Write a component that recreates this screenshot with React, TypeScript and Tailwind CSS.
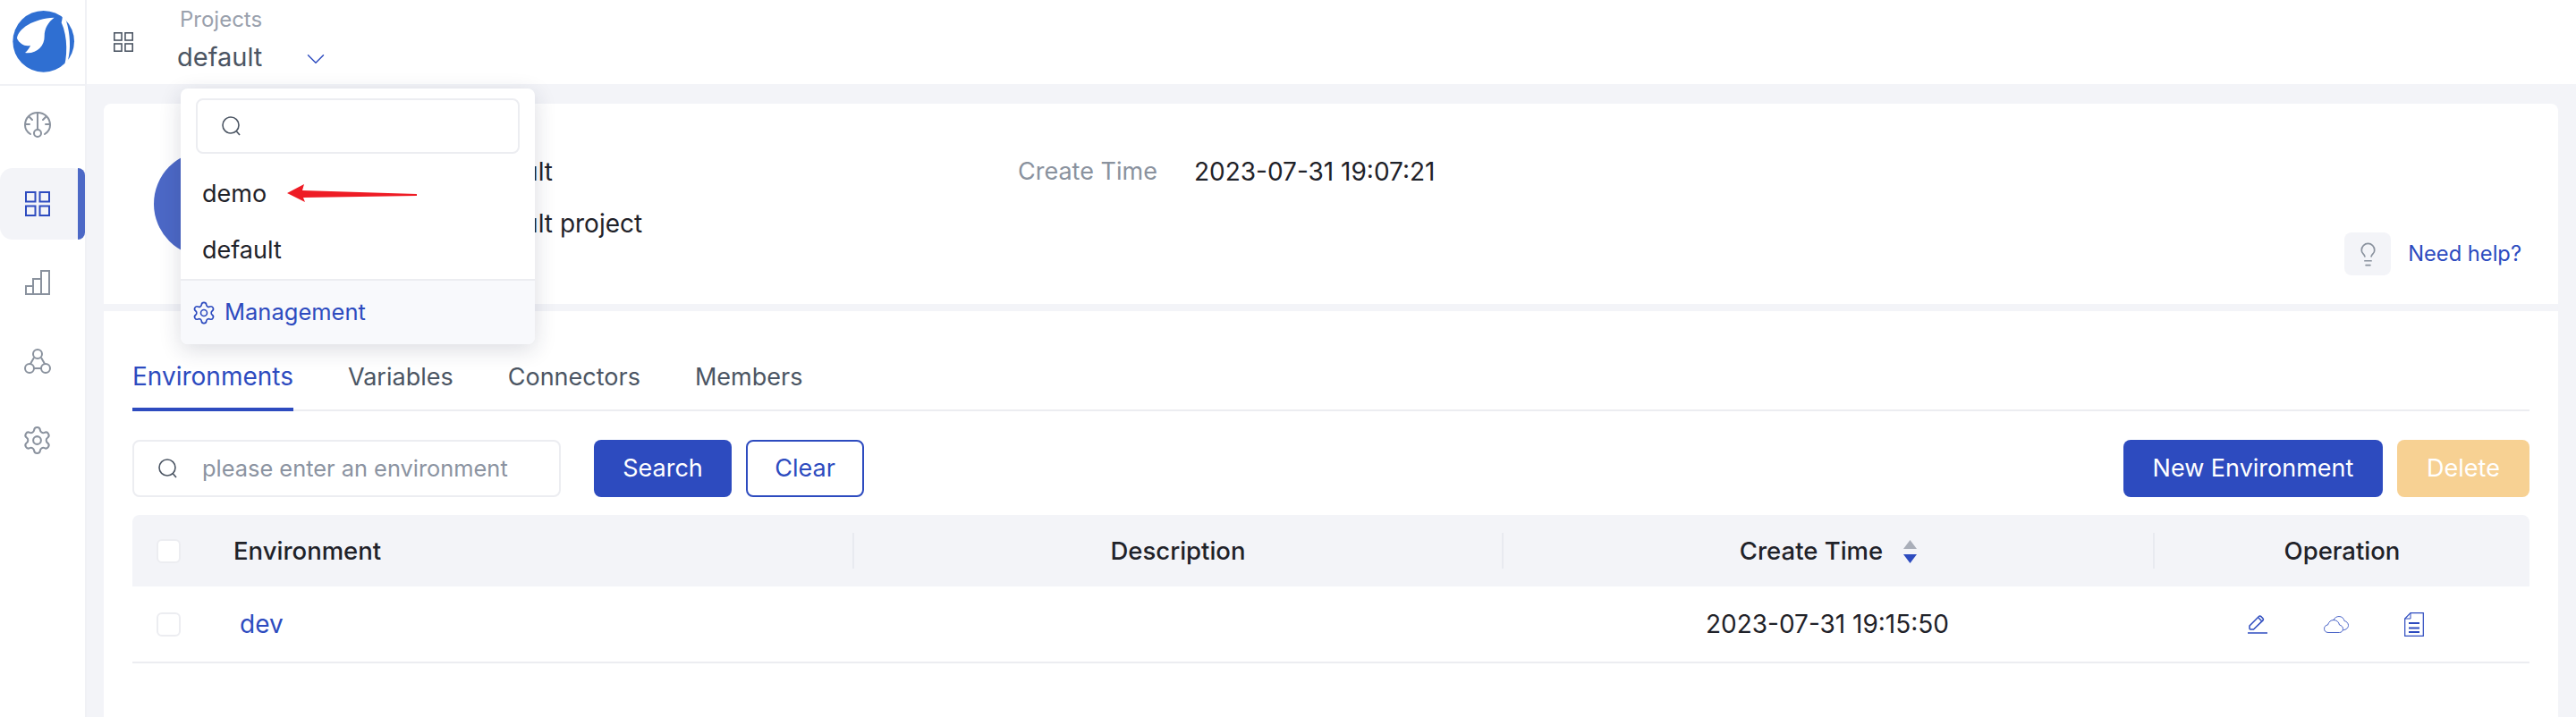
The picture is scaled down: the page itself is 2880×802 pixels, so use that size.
import { ChevronDown, Lightbulb, Settings } from "lucide-react";

const BLUE = "#2d4bbf";

function Logo() {
  return (
    <svg viewBox="0 0 252 240" className="h-[80px] w-[84px]">
      <circle cx="122" cy="115" r="103" fill="#2f6fd2" />
      <path
        d="M33 105C36 72 88 38 158 35C138 50 125 70 125 98C126 130 98 158 60 153C68 146 76 136 78 128C62 134 42 124 33 105Z"
        fill="#fff"
      />
      <path d="M186 24L198 46C212 90 214 140 204 178L187 215C203 170 204 100 182 52C184 44 186 34 186 24Z" fill="#fff" />
    </svg>
  );
}

function GridIcon({ className }: { className?: string }) {
  return (
    <svg viewBox="0 0 28 28" fill="none" stroke="currentColor" strokeWidth="2" className={className}>
      <rect x="1" y="1" width="10.5" height="10.5" />
      <rect x="16.5" y="1" width="10.5" height="10.5" />
      <rect x="1" y="16.5" width="10.5" height="10.5" />
      <rect x="16.5" y="16.5" width="10.5" height="10.5" />
    </svg>
  );
}

function GaugeIcon() {
  return (
    <svg viewBox="0 0 30 30" fill="none" stroke="currentColor" strokeWidth="2" strokeLinecap="round" className="h-[30px] w-[30px]">
      <path d="M7 25C3 22.5 1 18.5 1 15C1 7 7 1 15 1C23 1 29 7 29 15C29 18.5 27 22.5 23 25" />
      <path d="M15 1V20M2 14H6M24 14H28M6 6L9 9M24 6L21 9" />
      <circle cx="15" cy="24" r="4" />
    </svg>
  );
}

function BarsIcon() {
  return (
    <svg viewBox="0 0 28 28" fill="none" stroke="currentColor" strokeWidth="2" className="h-[28px] w-[28px]">
      <path d="M1 27V18H9V27ZM9 27V10H18V27ZM18 27V1H27V27Z" />
    </svg>
  );
}

function TriadIcon() {
  return (
    <svg viewBox="0 0 30 28" fill="none" stroke="currentColor" strokeWidth="2" className="h-[28px] w-[30px]">
      <circle cx="15" cy="6" r="5" />
      <circle cx="6" cy="22" r="5" />
      <circle cx="24" cy="22" r="5" />
      <path d="M11 10L7 17M19 10L23 17M11 22H19" />
    </svg>
  );
}

function SearchIcon() {
  return (
    <svg viewBox="0 0 24 24" fill="none" stroke="#4b5563" strokeWidth="1.6" className="h-[24px] w-[24px]">
      <circle cx="11" cy="11" r="9" />
      <path d="M17.5 18L21 22" />
    </svg>
  );
}

function SortIcon() {
  return (
    <svg viewBox="0 0 15 26" className="h-[26px] w-[15px]">
      <path d="M7.5 0L15 10H0Z" fill="#a9aeb9" />
      <path d="M7.5 26L15 16H0Z" fill={BLUE} />
    </svg>
  );
}

function EditIcon() {
  return (
    <svg viewBox="0 0 22 22" fill="none" stroke={BLUE} strokeWidth="1.5" className="h-[22px] w-[22px]">
      <path d="M2 16V13L12.5 2.5C13.2 1.8 14 1.8 14.6 2.4L17 4.8C17.6 5.4 17.6 6.2 17 6.9L6.5 17H3C2.4 17 2 16.6 2 16Z" />
      <path d="M12 4L15.5 7.5" />
      <path d="M0 21H22" />
    </svg>
  );
}

function CloudIcon() {
  return (
    <svg viewBox="0 0 28 19" fill="none" stroke={BLUE} strokeWidth="1" opacity="0.85" className="h-[19px] w-[28px]">
      <path d="M5 18.5C2 18.5 0.5 16.5 0.5 14.2C0.5 11.8 2.5 10 4.5 10C5.5 6.5 8 4.5 11 4.5C14.5 4.5 17 7 17.5 10C19.5 10.5 21.5 12 21.5 14.5C21.5 17 19.5 18.5 17.5 18.5Z" />
      <path d="M11 4.5C12 2 14.5 0.5 17 0.5C20 0.5 22.5 2.5 23 5.5C25.5 6 27.5 8 27.5 10.5C27.5 13 25.5 15.5 21.3 15.8" />
    </svg>
  );
}

function DocIcon() {
  return (
    <svg viewBox="0 0 22 27" fill="none" stroke={BLUE} className="h-[27px] w-[22px]">
      <path d="M7 .7H21.3V26.3H.7V7Z" strokeWidth="1.2" />
      <path d="M7 .7V7H.7" strokeWidth="1" />
      <path d="M5 12H17M5 17.5H17M5 22H17" strokeWidth="2" />
    </svg>
  );
}

const navItems = [
  { key: "overview", icon: <GaugeIcon /> },
  { key: "projects", icon: <GridIcon className="h-[28px] w-[28px]" />, active: true },
  { key: "stats", icon: <BarsIcon /> },
  { key: "graph", icon: <TriadIcon /> },
  { key: "settings", icon: <Settings className="h-[35px] w-[35px]" strokeWidth={1.4} /> },
];

function ProjectMenu() {
  return (
    <div className="absolute left-[202px] top-[99px] z-20 w-[396px] overflow-hidden rounded-lg bg-white text-[27px] shadow-[0_6px_24px_rgba(30,40,70,0.16)]">
      <div className="mx-[17px] mt-[11px] flex h-[62px] items-center rounded-lg border-2 border-[#ecedf1] pl-[26px]">
        <SearchIcon />
      </div>
      <div className="mt-[14px] flex h-[63px] items-center pl-[24px]">demo</div>
      <div className="flex h-[63px] items-center pl-[24px]">default</div>
      <div className="flex h-[73px] items-center gap-[9px] border-t-2 border-[#ecedf1] bg-[#f8f9fc] pl-[12px] text-[#2d4bbf]">
        <Settings className="h-[28px] w-[28px]" strokeWidth={1.4} />
        <span className="text-[25.5px]">Management</span>
      </div>
      <svg viewBox="0 0 150 24" className="absolute left-[119px] top-[107px] h-[24px] w-[150px]">
        <path d="M0 10L19 0L17 7L145 11V13L18 15L20 20Z" fill="#ee1c25" />
      </svg>
    </div>
  );
}

export default function App() {
  return (
    <div className="relative flex h-screen overflow-hidden bg-[#f3f4f8] font-[family-name:Inter,sans-serif] text-[28px] text-[#1f2229]">
      <aside className="w-[97px] shrink-0 border-r-2 border-[#f0f1f5] bg-white text-[#8a929e]">
        <div className="flex h-[96px] items-start border-b-2 border-[#f0f1f5] pl-[8px] pt-[8px]">
          <Logo />
        </div>
        <nav className="mt-[4px] flex flex-col gap-[8px]">
          {navItems.map((item) => (
            <div
              key={item.key}
              className={
                item.active
                  ? "relative flex h-[80px] items-center justify-center rounded-[14px] bg-[#f3f4f8] pr-[12px] text-[#2d4bbf]"
                  : "flex h-[80px] items-center justify-center pr-[12px]"
              }
            >
              {item.icon}
              {item.active && (
                <span className="absolute right-0 top-0 h-full w-[8px] rounded-r-[10px] bg-[#4c68c6]" />
              )}
            </div>
          ))}
        </nav>
      </aside>

      <div className="flex min-w-0 flex-1 flex-col">
        <header className="flex h-[94px] shrink-0 items-center bg-white pl-[30px] text-[#4b5563]">
          <GridIcon className="h-[22px] w-[22px]" />
          <div className="ml-[49px] flex flex-col self-start pt-[7px]">
            <span className="pl-[3px] text-[24px] leading-[30px] text-[#9aa1ad]">Projects</span>
            <div className="mt-[8px] flex items-center">
              <span className="text-[29px] leading-[36px]">default</span>
              <ChevronDown className="ml-[43px] mt-[4px] h-[34px] w-[34px] text-[#2d4bbf]" strokeWidth={1} />
            </div>
          </div>
        </header>

        <main className="flex flex-1 flex-col gap-[8px] pb-0 pl-[19px] pr-[20px] pt-[22px]">
          <section className="flex h-[224px] shrink-0 rounded-t-lg bg-white pl-[56px] pr-[41px]">
            <div className="h-[118px] w-[118px] shrink-0 self-center rounded-full bg-[#4c68c6]" />
            <div className="ml-[34px] mt-[54px] flex flex-col gap-[14px]">
              <div className="flex h-[44px] items-center">
                <span className="w-[202px] text-[#8a929e]">Name</span>
                <span className="w-[612px]">default</span>
                <span className="w-[197px] text-[27px] text-[#8a929e]">Create Time</span>
                <span>2023-07-31 19:07:21</span>
              </div>
              <div className="flex h-[44px] items-center">
                <span className="w-[202px] text-[#8a929e]">Description</span>
                <span>default project</span>
              </div>
            </div>
            <div className="ml-auto mb-[32px] flex items-center gap-[19px] self-end">
              <span className="flex h-[48px] w-[52px] items-center justify-center rounded-lg bg-[#f3f4f8] text-[#8a929e]">
                <Lightbulb className="h-[29px] w-[29px]" strokeWidth={1.4} />
              </span>
              <span className="text-[23.7px] text-[#2d4bbf]">Need help?</span>
            </div>
          </section>

          <section className="flex-1 bg-white px-[32px]">
            <div className="flex h-[112px] items-end gap-[61px] border-b-2 border-[#ecedf1] text-[27px] text-[#4b5563]">
              <span className="-mb-[2px] border-b-4 border-[#2d4bbf] pb-[14px] text-[28px] text-[#2d4bbf]">Environments</span>
              <span className="pb-[16px]">Variables</span>
              <span className="pb-[16px]">Connectors</span>
              <span className="pb-[16px]">Members</span>
            </div>

            <div className="mt-[32px] flex h-[64px] items-stretch text-[27px]">
              <label className="flex w-[479px] items-center rounded-lg border-2 border-[#ecedf1] pl-[26px]">
                <SearchIcon />
                <input
                  placeholder="please enter an environment"
                  className="ml-[26px] min-w-0 flex-1 text-[25.4px] outline-none placeholder:text-[#8b93a1]"
                />
              </label>
              <button className="ml-[37px] w-[154px] rounded-lg bg-[#2d4bbf] text-white">Search</button>
              <button className="ml-[16px] w-[132px] rounded-lg border-2 border-[#2d4bbf] text-[#2d4bbf]">Clear</button>
              <button className="ml-auto w-[290px] rounded-lg bg-[#2d4bbf] text-white">New Environment</button>
              <button className="ml-[16px] w-[148px] rounded-lg bg-[#f7d193] text-white">Delete</button>
            </div>

            <div className="mt-[20px]">
              <div className="grid h-[80px] grid-cols-[805px_726px_728px_421px] items-center rounded-t-lg bg-[#f3f4f8] text-[27.5px] font-medium">
                <div className="flex items-center">
                  <span className="ml-[27px] h-[27px] w-[27px] rounded-md border-2 border-[#ecedf1] bg-white" />
                  <span className="ml-[59px] pt-[2px]">Environment</span>
                </div>
                <div className="flex h-[40px] items-center justify-center border-l-2 border-[#e8eaf0] pt-[2px]">Description</div>
                <div className="flex h-[40px] items-center justify-center gap-[23px] border-l-2 border-[#e8eaf0] pt-[2px]">
                  Create Time
                  <SortIcon />
                </div>
                <div className="flex h-[40px] items-center justify-center border-l-2 border-[#e8eaf0] pt-[2px]">Operation</div>
              </div>
              <div className="grid h-[86px] grid-cols-[805px_726px_728px_421px] items-center border-b-2 border-[#ecedf1]">
                <div className="flex items-center">
                  <span className="ml-[27px] h-[27px] w-[27px] rounded-md border-2 border-[#ecedf1] bg-white" />
                  <span className="ml-[66px] text-[#2d4bbf]">dev</span>
                </div>
                <div />
                <div className="text-center">2023-07-31 19:15:50</div>
                <div className="flex items-center pl-[106px]">
                  <EditIcon />
                  <span className="ml-[63px]">
                    <CloudIcon />
                  </span>
                  <span className="ml-[62px]">
                    <DocIcon />
                  </span>
                </div>
              </div>
            </div>
          </section>
        </main>
      </div>

      <ProjectMenu />
    </div>
  );
}
